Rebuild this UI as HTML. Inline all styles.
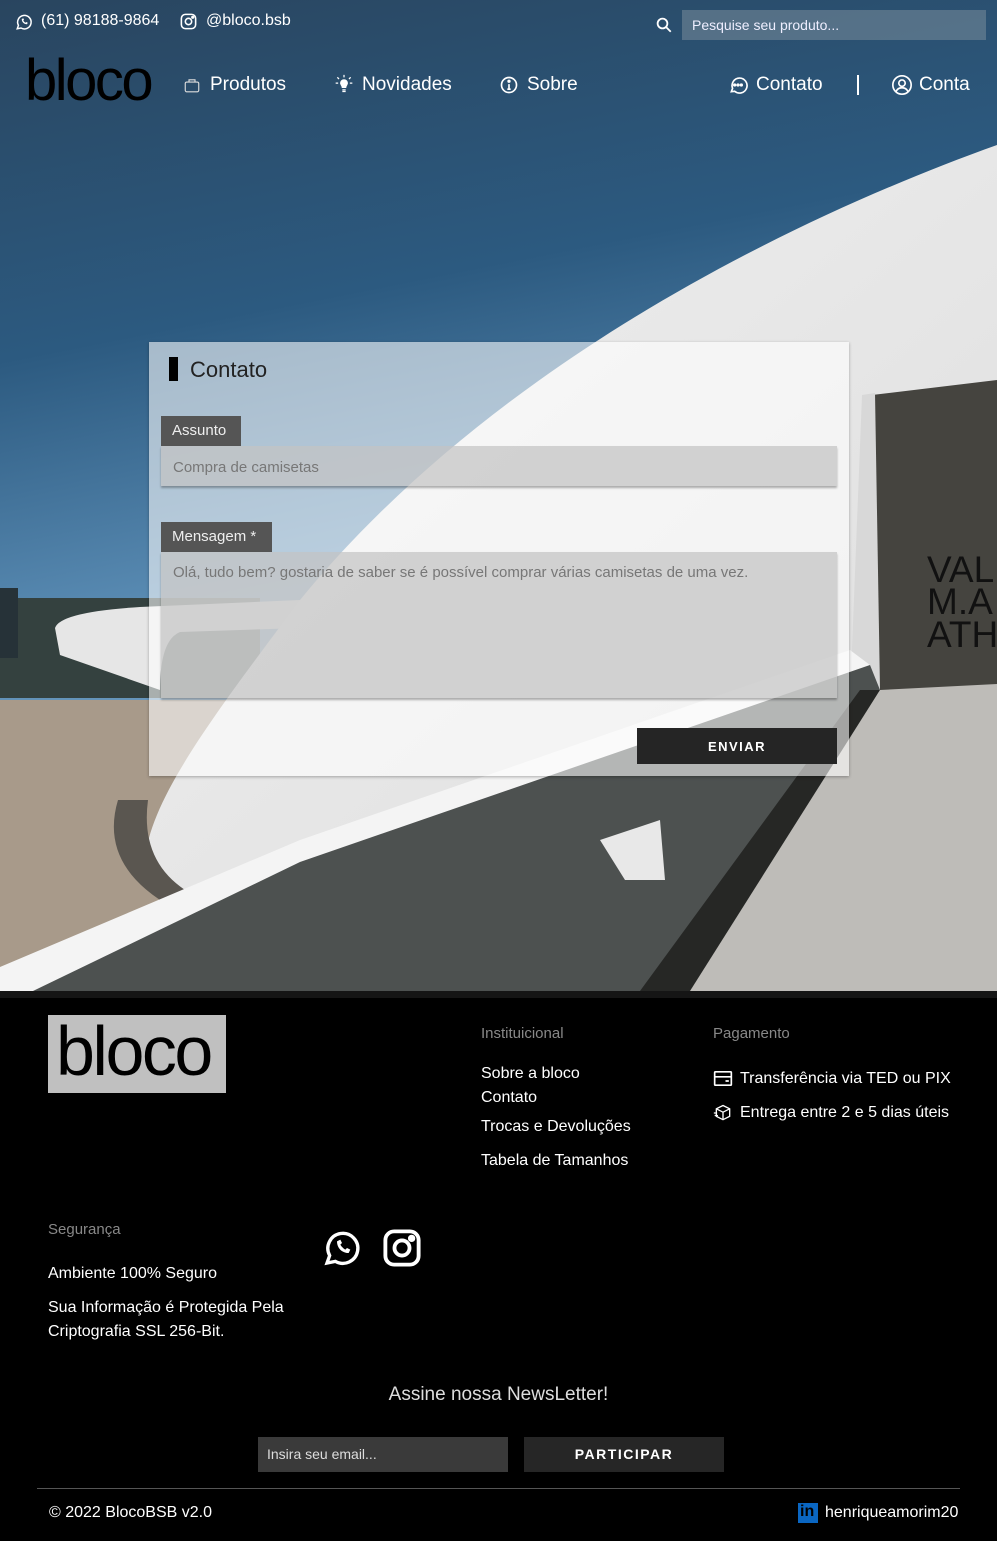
<!DOCTYPE html>
<html><head><meta charset="utf-8">
<style>
*{margin:0;padding:0;box-sizing:border-box}
body{width:997px;height:1541px;background:#000;font-family:"Liberation Sans",sans-serif;position:relative;overflow:hidden;color:#fff}
.abs{position:absolute}
.hero{position:absolute;left:0;top:0;width:997px;height:991px;overflow:hidden}
.t{position:absolute;white-space:nowrap}
</style></head><body>
<div class="hero">
<svg width="997" height="991" viewBox="0 0 997 991" style="position:absolute;left:0;top:0">
<defs>
<linearGradient id="sky" x1="0" y1="0" x2="0.2" y2="1">
<stop offset="0" stop-color="#29455f"/><stop offset="0.35" stop-color="#2c5a80"/><stop offset="0.62" stop-color="#5a8cb4"/><stop offset="1" stop-color="#8fb5d2"/>
</linearGradient>
<linearGradient id="dome" x1="0" y1="0" x2="1" y2="1">
<stop offset="0" stop-color="#f2f2f2"/><stop offset="1" stop-color="#dcdcdc"/>
</linearGradient>
</defs>
<rect width="997" height="991" fill="url(#sky)"/>
<rect x="0" y="598" width="260" height="100" fill="#34413f"/>
<rect x="0" y="588" width="18" height="70" fill="#263238"/>
<polygon points="0,700 300,700 150,991 0,991" fill="#a89a8a"/>
<path d="M55,628 Q60,612 140,607 L300,600 L300,628 L180,632 Q160,640 160,690 L60,655 Z" fill="#e6e6e6"/>
<path d="M997,145 C760,230 480,380 300,600 C210,720 150,800 145,860 L170,900 L0,991 L997,991 Z" fill="url(#dome)"/>
<path d="M118,800 Q100,860 160,900 L185,890 Q140,860 148,800 Z" fill="#5a5650"/>
<polygon points="872,395 997,380 997,690 878,692" fill="#45443f"/>
<polygon points="862,395 875,393 880,690 850,700" fill="#d8d8d8"/>
<text x="927" y="582" font-family="Liberation Sans" font-size="37" fill="#111">VAL</text>
<text x="927" y="614" font-family="Liberation Sans" font-size="37" fill="#111">M.A</text>
<text x="927" y="647" font-family="Liberation Sans" font-size="37" fill="#111">ATH</text>
<polygon points="0,967 300,840 850,650 870,665 300,862 33,991 0,991" fill="#f4f4f4"/>
<polygon points="33,991 300,862 870,665 880,690 700,991" fill="#4d5150"/>
<polygon points="860,690 880,690 700,991 640,991" fill="#262725"/>
<polygon points="880,690 997,684 997,991 690,991" fill="#bebcb8"/>
<polygon points="600,840 660,820 665,880 625,880" fill="#e8e8e8"/>
</svg>
</div>

<svg class="abs" style="left:15px;top:13px" width="18" height="18" viewBox="0 0 24 24" fill="none" stroke="#fff" stroke-width="2"><path d="M3 21l1.6-4.5A9 9 0 1 1 8 20z"/><path d="M9 8c0 4 3 7 7 7l1-2-2-1-1 1c-1-.5-2.5-2-3-3l1-1-1-2z" fill="#fff" stroke="none"/></svg>
<div class="t" style="left:41px;top:12px;font-size:16px">(61) 98188-9864</div>
<svg class="abs" style="left:179px;top:12px" width="19" height="19" viewBox="0 0 24 24" fill="none" stroke="#fff" stroke-width="2"><rect x="3" y="3" width="18" height="18" rx="5"/><circle cx="12" cy="12" r="4"/><circle cx="17.3" cy="6.7" r="1" fill="#fff"/></svg>
<div class="t" style="left:206px;top:12px;font-size:16px">@bloco.bsb</div>
<svg class="abs" style="left:655px;top:16px" width="18" height="18" viewBox="0 0 24 24" fill="none" stroke="#fff" stroke-width="2.4"><circle cx="10" cy="10" r="6.5"/><path d="M15 15l6 6"/></svg>
<div class="abs" style="left:682px;top:10px;width:304px;height:30px;background:rgba(120,140,155,0.55)"></div>
<div class="t" style="left:692px;top:17px;font-size:14px;color:#eef">Pesquise seu produto...</div>

<div class="t" style="left:25px;top:47px;font-size:58px;color:#000;letter-spacing:-2.5px;font-weight:400">bloco</div>
<svg class="abs" style="left:183px;top:76px" width="18" height="18" viewBox="0 0 24 24" fill="none" stroke="#ddd" stroke-width="1.5"><rect x="3" y="8" width="18" height="13" rx="2"/><path d="M8 8V5h8v3"/></svg>
<div class="t" style="left:210px;top:74px;font-size:19px">Produtos</div>
<svg class="abs" style="left:334px;top:74px" width="20" height="20" viewBox="0 0 24 24" fill="#fff" stroke="#fff" stroke-width="1.5"><path d="M8 11a4 4 0 1 1 8 0c0 2-2 3-2 5h-4c0-2-2-3-2-5z"/><path d="M10 19h4M10 21h4M2 11h3M19 11h3M4 4l2 2M20 4l-2 2M12 1v3" fill="none"/></svg>
<div class="t" style="left:362px;top:74px;font-size:19px">Novidades</div>
<svg class="abs" style="left:499px;top:75px" width="20" height="20" viewBox="0 0 24 24" fill="none" stroke="#fff" stroke-width="2"><circle cx="12" cy="12" r="9"/><path d="M12 11v6M10 17h4"/><circle cx="12" cy="7.5" r="1" fill="#fff"/></svg>
<div class="t" style="left:527px;top:74px;font-size:19px">Sobre</div>
<svg class="abs" style="left:728px;top:75px" width="20" height="20" viewBox="0 0 24 24" fill="none" stroke="#fff" stroke-width="2"><path d="M4 20l1.5-4A9 9 0 1 1 8 19.5z"/><circle cx="8" cy="12" r="1" fill="#fff"/><circle cx="12" cy="12" r="1" fill="#fff"/><circle cx="16" cy="12" r="1" fill="#fff"/></svg>
<div class="t" style="left:756px;top:74px;font-size:19px">Contato</div>
<div class="abs" style="left:857px;top:75px;width:2px;height:20px;background:#fff"></div>
<svg class="abs" style="left:891px;top:74px" width="22" height="22" viewBox="0 0 24 24" fill="none" stroke="#fff" stroke-width="1.8"><circle cx="12" cy="12" r="10"/><circle cx="12" cy="10" r="3.5"/><path d="M5.5 19c1.5-3 4-4 6.5-4s5 1 6.5 4"/></svg>
<div class="t" style="left:919px;top:74px;font-size:19px">Conta</div>

<div class="abs" style="left:149px;top:342px;width:700px;height:434px;background:rgba(255,255,255,0.58);box-shadow:0 1px 3px rgba(0,0,0,.3)"></div>
<div class="abs" style="left:169px;top:357px;width:9px;height:24px;background:#000"></div>
<div class="t" style="left:190px;top:357px;font-size:22px;color:#222">Contato</div>
<div class="abs" style="left:161px;top:416px;width:80px;height:30px;background:#555"></div>
<div class="t" style="left:172px;top:422px;font-size:15px;color:#eee">Assunto</div>
<div class="abs" style="left:161px;top:446px;width:676px;height:40px;background:rgba(195,195,195,0.72);box-shadow:0 2px 2px rgba(0,0,0,.3)"></div>
<div class="t" style="left:173px;top:459px;font-size:15px;color:#777">Compra de camisetas</div>
<div class="abs" style="left:161px;top:522px;width:111px;height:30px;background:#555"></div>
<div class="t" style="left:172px;top:528px;font-size:15px;color:#eee">Mensagem *</div>
<div class="abs" style="left:161px;top:552px;width:676px;height:146px;background:rgba(195,195,195,0.72);box-shadow:0 2px 2px rgba(0,0,0,.3)"></div>
<div class="t" style="left:173px;top:564px;font-size:15px;color:#777">Olá, tudo bem? gostaria de saber se é possível comprar várias camisetas de uma vez.</div>
<div class="abs" style="left:637px;top:728px;width:200px;height:36px;background:#252525"></div>
<div class="t" style="left:637px;top:739px;width:200px;text-align:center;font-size:13px;font-weight:bold;letter-spacing:1.5px">ENVIAR</div>

<div class="abs" style="left:0;top:991px;width:997px;height:7px;background:#151515"></div>
<div class="abs" style="left:48px;top:1015px;width:178px;height:78px;background:#c0c0c0"></div>
<div class="t" style="left:56px;top:1011px;font-size:70px;color:#000;letter-spacing:-2.5px">bloco</div>
<div class="t" style="left:481px;top:1025px;font-size:15px;color:#888">Instituicional</div>
<div class="t" style="left:481px;top:1065px;font-size:16px">Sobre a bloco</div>
<div class="t" style="left:481px;top:1089px;font-size:16px">Contato</div>
<div class="t" style="left:481px;top:1118px;font-size:16px">Trocas e Devoluções</div>
<div class="t" style="left:481px;top:1152px;font-size:16px">Tabela de Tamanhos</div>
<div class="t" style="left:713px;top:1025px;font-size:15px;color:#888">Pagamento</div>
<svg class="abs" style="left:713px;top:1070px" width="20" height="17" viewBox="0 0 24 20" fill="none" stroke="#fff" stroke-width="2"><rect x="2" y="2" width="20" height="16" rx="1"/><path d="M2 8h20M15 13h4"/></svg>
<div class="t" style="left:740px;top:1070px;font-size:16px">Transferência via TED ou PIX</div>
<svg class="abs" style="left:713px;top:1103px" width="20" height="20" viewBox="0 0 24 24" fill="none" stroke="#fff" stroke-width="1.6"><path d="M12 3l8 4v9l-8 4-8-4V7z"/><path d="M4 7l8 4 8-4M12 11v9M1 12h4M2 15h4"/></svg>
<div class="t" style="left:740px;top:1104px;font-size:16px">Entrega entre 2 e 5 dias úteis</div>
<div class="t" style="left:48px;top:1221px;font-size:15px;color:#888">Segurança</div>
<div class="t" style="left:48px;top:1265px;font-size:16px">Ambiente 100% Seguro</div>
<div class="t" style="left:48px;top:1299px;font-size:16px">Sua Informação é Protegida Pela</div>
<div class="t" style="left:48px;top:1323px;font-size:16px">Criptografia SSL 256-Bit.</div>
<svg class="abs" style="left:322px;top:1228px" width="40" height="40" viewBox="0 0 24 24" fill="none" stroke="#fff" stroke-width="2"><path d="M3 21l1.6-4.5A9 9 0 1 1 8 20z"/><path d="M9 8c0 4 3 7 7 7l1-2-2-1-1 1c-1-.5-2.5-2-3-3l1-1-1-2z" fill="#fff" stroke="none"/></svg>
<svg class="abs" style="left:381px;top:1227px" width="42" height="42" viewBox="0 0 24 24" fill="none" stroke="#fff" stroke-width="2.2"><rect x="2.5" y="2.5" width="19" height="19" rx="5"/><circle cx="12" cy="12" r="4.3"/><circle cx="17.5" cy="6.5" r="1" fill="#fff"/></svg>
<div class="t" style="left:0;top:1384px;width:997px;text-align:center;font-size:19px;color:#ddd">Assine nossa NewsLetter!</div>
<div class="abs" style="left:258px;top:1437px;width:250px;height:35px;background:#3a3a3a"></div>
<div class="t" style="left:267px;top:1446px;font-size:14px;color:#ddd">Insira seu email...</div>
<div class="abs" style="left:524px;top:1437px;width:200px;height:35px;background:#262626"></div>
<div class="t" style="left:524px;top:1446px;width:200px;text-align:center;font-size:14px;font-weight:bold;letter-spacing:1.5px">PARTICIPAR</div>
<div class="abs" style="left:37px;top:1488px;width:923px;height:1px;background:#555"></div>
<div class="t" style="left:49px;top:1504px;font-size:16px">© 2022 BlocoBSB v2.0</div>
<div class="abs" style="left:798px;top:1503px;width:20px;height:20px;background:#0a66c2"></div>
<div class="t" style="left:800px;top:1503px;font-size:16px;font-weight:bold;color:#000">in</div>
<div class="t" style="left:825px;top:1504px;font-size:16px">henriqueamorim20</div>
</body></html>
